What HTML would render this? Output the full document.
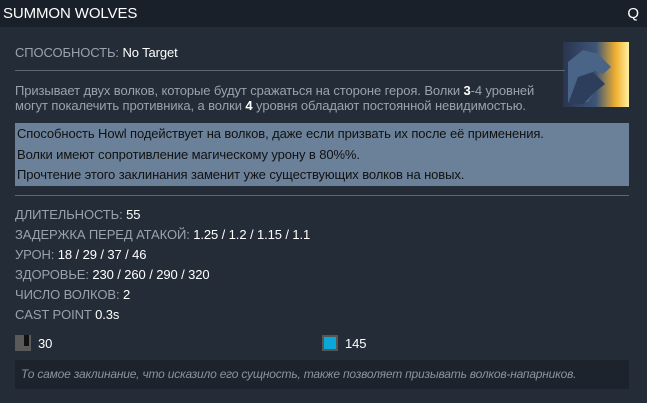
<!DOCTYPE html>
<html><head><meta charset="utf-8"><style>
*{margin:0;padding:0;box-sizing:border-box}
body{width:647px;height:403px;background:#232c37;font-family:"Liberation Sans","DejaVu Sans",sans-serif;font-size:13px;color:#9aa3ad;position:relative;overflow:hidden;letter-spacing:-0.1px}
.hdr{position:absolute;left:0;top:0;width:647px;height:27px;background:#19202a;color:#fff;font-size:15px;line-height:27px;padding-left:3px}
.hdr span{position:absolute;right:8px;top:0}
.a{position:absolute;left:15px;white-space:nowrap}
.w{color:#fff}
.line{position:absolute;height:1px;background:#5f6770;left:15px}
.box{position:absolute;left:15px;top:123px;width:614px;height:63px;background:#6b8199;color:#111;padding-left:2px;padding-top:1px}
.box div{height:20.5px;line-height:20px}
.foot{position:absolute;left:15px;top:360px;width:614px;height:29px;background:#1c232c;color:#8b939c;font-style:italic;line-height:29px;padding-left:6px;font-size:12px;letter-spacing:-0.2px}
</style></head><body>
<div class="hdr">SUMMON WOLVES<span>Q</span></div>
<div class="a" style="top:45px">СПОСОБНОСТЬ: <span class="w">No Target</span></div>
<div style="position:absolute;left:563px;top:42px;width:66px;height:65px;background:linear-gradient(90deg,#2a3550 0%,#3e5577 50%,#f0b030 80%,#fff0a0 100%)">
<svg width="66" height="65"><path d="M5 20 L20 8 L35 12 L48 25 L40 32 L30 28 L35 45 L25 60 L5 60Z" fill="#4a6488"/><path d="M15 35 L30 30 L42 42 L32 50 L20 62 L5 62Z" fill="#2d3e5c"/></svg></div>
<div class="line" style="top:70px;width:550px"></div>
<div class="a" style="top:83px">Призывает двух волков, которые будут сражаться на стороне героя. Волки <b class="w">3</b>-4 уровней</div>
<div class="a" style="top:98px">могут покалечить противника, а волки <b class="w">4</b> уровня обладают постоянной невидимостью.</div>
<div class="box"><div>Способность Howl подействует на волков, даже если призвать их после её применения.</div><div>Волки имеют сопротивление магическому урону в 80%%.</div><div>Прочтение этого заклинания заменит уже существующих волков на новых.</div></div>
<div class="line" style="top:195px;width:614px"></div>
<div class="a" style="top:207px">ДЛИТЕЛЬНОСТЬ: <span class="w">55</span></div>
<div class="a" style="top:227px">ЗАДЕРЖКА ПЕРЕД АТАКОЙ: <span class="w">1.25 / 1.2 / 1.15 / 1.1</span></div>
<div class="a" style="top:247px">УРОН: <span class="w">18 / 29 / 37 / 46</span></div>
<div class="a" style="top:267px">ЗДОРОВЬЕ: <span class="w">230 / 260 / 290 / 320</span></div>
<div class="a" style="top:287px">ЧИСЛО ВОЛКОВ: <span class="w">2</span></div>
<div class="a" style="top:307px">CAST POINT <span class="w">0.3s</span></div>
<div style="position:absolute;left:15px;top:335px;width:16px;height:16px;background:#5a5a5a"><div style="position:absolute;left:9px;top:0;width:5px;height:11px;background:#111"></div></div>
<div class="a w" style="left:38px;top:336px">30</div>
<div style="position:absolute;left:322px;top:335px;width:16px;height:16px;background:#555"><div style="position:absolute;left:2px;top:2px;width:12px;height:12px;background:#09a8d8"></div></div>
<div class="a w" style="left:345px;top:336px">145</div>
<div class="foot">То самое заклинание, что исказило его сущность, также позволяет призывать волков-напарников.</div>
</body></html>
